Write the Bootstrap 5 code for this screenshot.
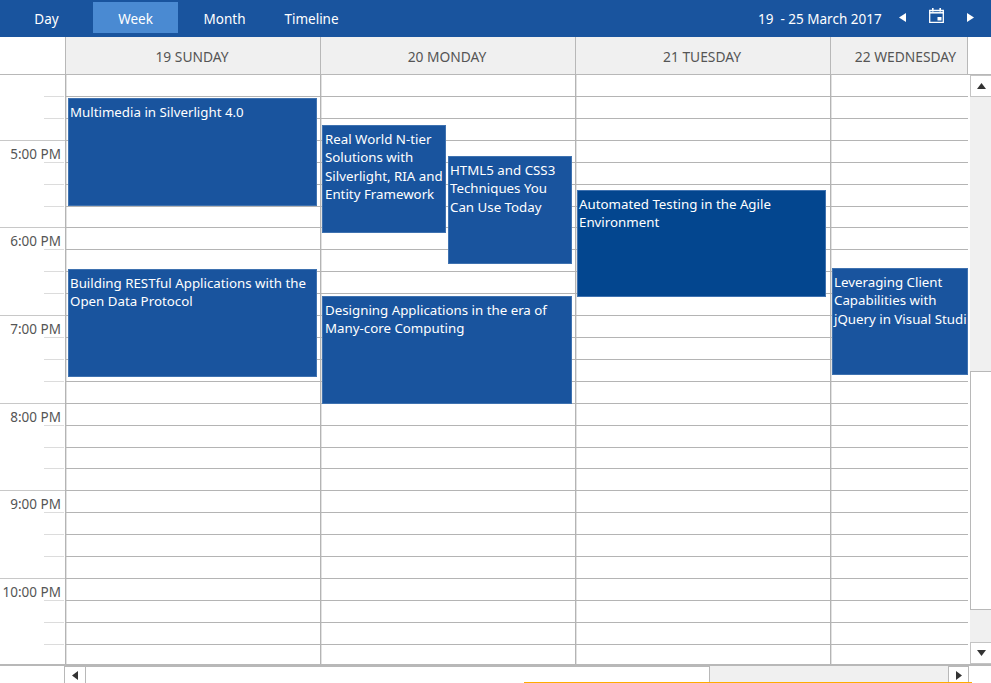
<!DOCTYPE html>
<html lang="en">
<head>
<meta charset="utf-8">
<title>Scheduler</title>
<link href="https://cdn.jsdelivr.net/npm/bootstrap@5.3.0/dist/css/bootstrap.min.css" rel="stylesheet">
<style>
html,body{height:683px;overflow:hidden;background:#fff}
body{font-family:"Noto Sans","Open Sans",sans-serif;font-size:13.5px;color:#555}
.topbar{height:37px;background:#19549e;color:#fff;font-size:13.5px}
.viewtab{height:31px;margin-top:2px;width:85px;color:#fff;text-decoration:none;padding-top:3px}
.viewtab:hover{color:#fff}
.viewtab.on{background:#4a8ad2}
.tab-day{margin-left:4px}
.tab-week{margin-left:4px}
.tab-month{margin-left:4px}
.tab-time{margin-left:2px}
.datebox{width:233px}
.datetxt{padding-top:2px}
.navprev{margin-left:17px;margin-bottom:2px}
.navcal{margin-left:23px;margin-bottom:6px}
.navnext{margin-left:23px;margin-bottom:2px}
.headrow{height:38px;border-bottom:1px solid #b8b8b8;font-size:13.8px}
.gutter{width:65px;flex:none}
.daycol{width:255px;flex:none;background:#f0f0f0;border-left:1px solid #b8b8b8;padding-top:4px;padding-right:2px}
.daycol.last{width:138px;border-right:1px solid #b8b8b8;padding-left:13px;padding-right:0}
.mainarea{height:589px}
.gridpane{width:969px;flex:none;overflow:hidden}
.slotrow{height:21.92px}
.slotrow.first{height:22px}
.tcell{width:65px;flex:none;position:relative;text-align:right;padding-right:4px;line-height:27px;white-space:nowrap}
.tcell::after{content:"";position:absolute;right:1px;bottom:0;width:20px;border-bottom:1px solid #dcdcdc}
.tcell.hourcell{border-bottom:1px solid #c8c8c8;height:100%}
.tcell.hourcell::after{display:none}
.dcell{width:255px;flex:none;border-left:1px solid #b4b4b4;border-bottom:1px solid #b4b4b4;box-shadow:inset 1px 0 0 #e2e2e2}
.dcell.last{width:138px}
.evt{position:absolute;background:#19549e;border:1px solid #3f72b0;color:#fff;padding:4px 1px;font-size:13.3px;line-height:18.3px;overflow:hidden;white-space:nowrap}
.evt.deep{background:#03468f}
.evt.inset2{padding-left:2px}
.vbar{width:21px;margin-left:1px;flex:none;background:#f0f0f0}
.vbtn{height:22px;background:#fff;border:1px solid #c4c4c4;border-right:0}
.vtop{height:274px}
.vthumb{height:239px;background:#fff;border:1px solid #b8b8b8;border-right:0}
.hbar{height:19px;padding-left:64px;position:relative;border-top:2px solid #b8b8b8}
.hbtn{width:22px;height:17px;background:#fff;border:1px solid #b8b8b8;border-bottom:0;flex:none}
.hbtn.end{width:21px}
.hthumb{width:624px;height:17px;background:#fff;border:1px solid #b8b8b8;border-left:0;border-bottom:0;flex:none}
.htrack{width:238px;height:17px;background:#f0f0f0;flex:none}
.orangeline{position:absolute;left:524px;right:19px;bottom:0;height:1px;background:#ffab00}
</style>
</head>
<body>
<nav class="topbar d-flex align-items-start">
  <a class="viewtab tab-day d-flex align-items-center justify-content-center" href="#">Day</a>
  <a class="viewtab on tab-week d-flex align-items-center justify-content-center" href="#">Week</a>
  <a class="viewtab tab-month d-flex align-items-center justify-content-center" href="#">Month</a>
  <a class="viewtab tab-time d-flex align-items-center justify-content-center" href="#">Timeline</a>
  <div class="datebox ms-auto d-flex align-items-center h-100">
    <span class="datetxt">19&nbsp; - 25 March 2017</span>
    <svg class="navprev" width="7" height="9" viewBox="0 0 7 9"><path d="M7 0v9L0 4.500z" fill="#fff"/></svg>
    <svg class="navcal" width="15" height="15" viewBox="0 0 15 15" fill="none"><path d="M.7 2.500h13.600v11.800H.7z" stroke="#fff" stroke-width="1.300"/><path d="M0 4.800h15" stroke="#fff" stroke-width="1.500"/><path d="M3.800 0v3.500M11.200 0v3.500" stroke="#fff" stroke-width="1.600"/><path d="M8.500 9h4v3.500h-4z" fill="#fff"/></svg>
    <svg class="navnext" width="7" height="9" viewBox="0 0 7 9"><path d="M0 0v9l7-4.500z" fill="#fff"/></svg>
  </div>
</nav>
<div class="headrow d-flex">
  <div class="gutter"></div>
  <div class="daycol d-flex align-items-center justify-content-center">19 SUNDAY</div>
  <div class="daycol d-flex align-items-center justify-content-center">20 MONDAY</div>
  <div class="daycol d-flex align-items-center justify-content-center">21 TUESDAY</div>
  <div class="daycol last d-flex align-items-center justify-content-center">22 WEDNESDAY</div>
</div>
<div class="mainarea d-flex">
  <div class="gridpane position-relative">
    <div class="slotrow first d-flex"><div class="tcell"></div><div class="dcell"></div><div class="dcell"></div><div class="dcell"></div><div class="dcell last"></div></div>
    <div class="slotrow d-flex"><div class="tcell"></div><div class="dcell"></div><div class="dcell"></div><div class="dcell"></div><div class="dcell last"></div></div>
    <div class="slotrow d-flex"><div class="tcell hourcell"></div><div class="dcell"></div><div class="dcell"></div><div class="dcell"></div><div class="dcell last"></div></div>
    <div class="slotrow d-flex"><div class="tcell">5:00 PM</div><div class="dcell"></div><div class="dcell"></div><div class="dcell"></div><div class="dcell last"></div></div>
    <div class="slotrow d-flex"><div class="tcell"></div><div class="dcell"></div><div class="dcell"></div><div class="dcell"></div><div class="dcell last"></div></div>
    <div class="slotrow d-flex"><div class="tcell"></div><div class="dcell"></div><div class="dcell"></div><div class="dcell"></div><div class="dcell last"></div></div>
    <div class="slotrow d-flex"><div class="tcell hourcell"></div><div class="dcell"></div><div class="dcell"></div><div class="dcell"></div><div class="dcell last"></div></div>
    <div class="slotrow d-flex"><div class="tcell">6:00 PM</div><div class="dcell"></div><div class="dcell"></div><div class="dcell"></div><div class="dcell last"></div></div>
    <div class="slotrow d-flex"><div class="tcell"></div><div class="dcell"></div><div class="dcell"></div><div class="dcell"></div><div class="dcell last"></div></div>
    <div class="slotrow d-flex"><div class="tcell"></div><div class="dcell"></div><div class="dcell"></div><div class="dcell"></div><div class="dcell last"></div></div>
    <div class="slotrow d-flex"><div class="tcell hourcell"></div><div class="dcell"></div><div class="dcell"></div><div class="dcell"></div><div class="dcell last"></div></div>
    <div class="slotrow d-flex"><div class="tcell">7:00 PM</div><div class="dcell"></div><div class="dcell"></div><div class="dcell"></div><div class="dcell last"></div></div>
    <div class="slotrow d-flex"><div class="tcell"></div><div class="dcell"></div><div class="dcell"></div><div class="dcell"></div><div class="dcell last"></div></div>
    <div class="slotrow d-flex"><div class="tcell"></div><div class="dcell"></div><div class="dcell"></div><div class="dcell"></div><div class="dcell last"></div></div>
    <div class="slotrow d-flex"><div class="tcell hourcell"></div><div class="dcell"></div><div class="dcell"></div><div class="dcell"></div><div class="dcell last"></div></div>
    <div class="slotrow d-flex"><div class="tcell">8:00 PM</div><div class="dcell"></div><div class="dcell"></div><div class="dcell"></div><div class="dcell last"></div></div>
    <div class="slotrow d-flex"><div class="tcell"></div><div class="dcell"></div><div class="dcell"></div><div class="dcell"></div><div class="dcell last"></div></div>
    <div class="slotrow d-flex"><div class="tcell"></div><div class="dcell"></div><div class="dcell"></div><div class="dcell"></div><div class="dcell last"></div></div>
    <div class="slotrow d-flex"><div class="tcell hourcell"></div><div class="dcell"></div><div class="dcell"></div><div class="dcell"></div><div class="dcell last"></div></div>
    <div class="slotrow d-flex"><div class="tcell">9:00 PM</div><div class="dcell"></div><div class="dcell"></div><div class="dcell"></div><div class="dcell last"></div></div>
    <div class="slotrow d-flex"><div class="tcell"></div><div class="dcell"></div><div class="dcell"></div><div class="dcell"></div><div class="dcell last"></div></div>
    <div class="slotrow d-flex"><div class="tcell"></div><div class="dcell"></div><div class="dcell"></div><div class="dcell"></div><div class="dcell last"></div></div>
    <div class="slotrow d-flex"><div class="tcell hourcell"></div><div class="dcell"></div><div class="dcell"></div><div class="dcell"></div><div class="dcell last"></div></div>
    <div class="slotrow d-flex"><div class="tcell">10:00 PM</div><div class="dcell"></div><div class="dcell"></div><div class="dcell"></div><div class="dcell last"></div></div>
    <div class="slotrow d-flex"><div class="tcell"></div><div class="dcell"></div><div class="dcell"></div><div class="dcell"></div><div class="dcell last"></div></div>
    <div class="slotrow d-flex"><div class="tcell"></div><div class="dcell"></div><div class="dcell"></div><div class="dcell"></div><div class="dcell last"></div></div>
    <div class="slotrow d-flex"><div class="tcell"></div><div class="dcell"></div><div class="dcell"></div><div class="dcell"></div><div class="dcell last"></div></div>

    <div class="evt" style="left:68px;top:23px;width:249px;height:108px">Multimedia in Silverlight 4.0</div>
    <div class="evt inset2" style="left:322px;top:50px;width:124px;height:108px">Real World N-tier<br>Solutions with<br>Silverlight, RIA and<br>Entity Framework</div>
    <div class="evt" style="left:448px;top:81px;width:124px;height:108px">HTML5 and CSS3<br>Techniques You<br>Can Use Today</div>
    <div class="evt deep" style="left:577px;top:115px;width:249px;height:107px">Automated Testing in the Agile<br>Environment</div>
    <div class="evt" style="left:68px;top:194px;width:249px;height:108px">Building RESTful Applications with the<br>Open Data Protocol</div>
    <div class="evt inset2" style="left:322px;top:221px;width:250px;height:108px">Designing Applications in the era of<br>Many-core Computing</div>
    <div class="evt" style="left:832px;top:193px;width:136px;height:107px">Leveraging Client<br>Capabilities with<br>jQuery in Visual Studio</div>
  </div>
  <div class="vbar d-flex flex-column">
    <div class="vbtn d-flex align-items-center justify-content-center"><svg width="9" height="6" viewBox="0 0 9 6"><path d="M4.500 0L9 6H0z" fill="#333"/></svg></div>
    <div class="vtop"></div>
    <div class="vthumb"></div>
    <div class="flex-grow-1"></div>
    <div class="vbtn d-flex align-items-center justify-content-center"><svg width="9" height="6" viewBox="0 0 9 6"><path d="M0 0h9L4.500 6z" fill="#333"/></svg></div>
  </div>
</div>
<div class="hbar d-flex">
  <div class="hbtn d-flex align-items-center justify-content-center"><svg width="6" height="9" viewBox="0 0 6 9"><path d="M6 0v9L0 4.500z" fill="#333"/></svg></div>
  <div class="hthumb"></div>
  <div class="htrack"></div>
  <div class="hbtn end d-flex align-items-center justify-content-center"><svg width="6" height="9" viewBox="0 0 6 9"><path d="M0 0v9l6-4.500z" fill="#333"/></svg></div>
  <div class="orangeline"></div>
</div>
<script src="https://cdn.jsdelivr.net/npm/bootstrap@5.3.0/dist/js/bootstrap.bundle.min.js"></script>
</body>
</html>
